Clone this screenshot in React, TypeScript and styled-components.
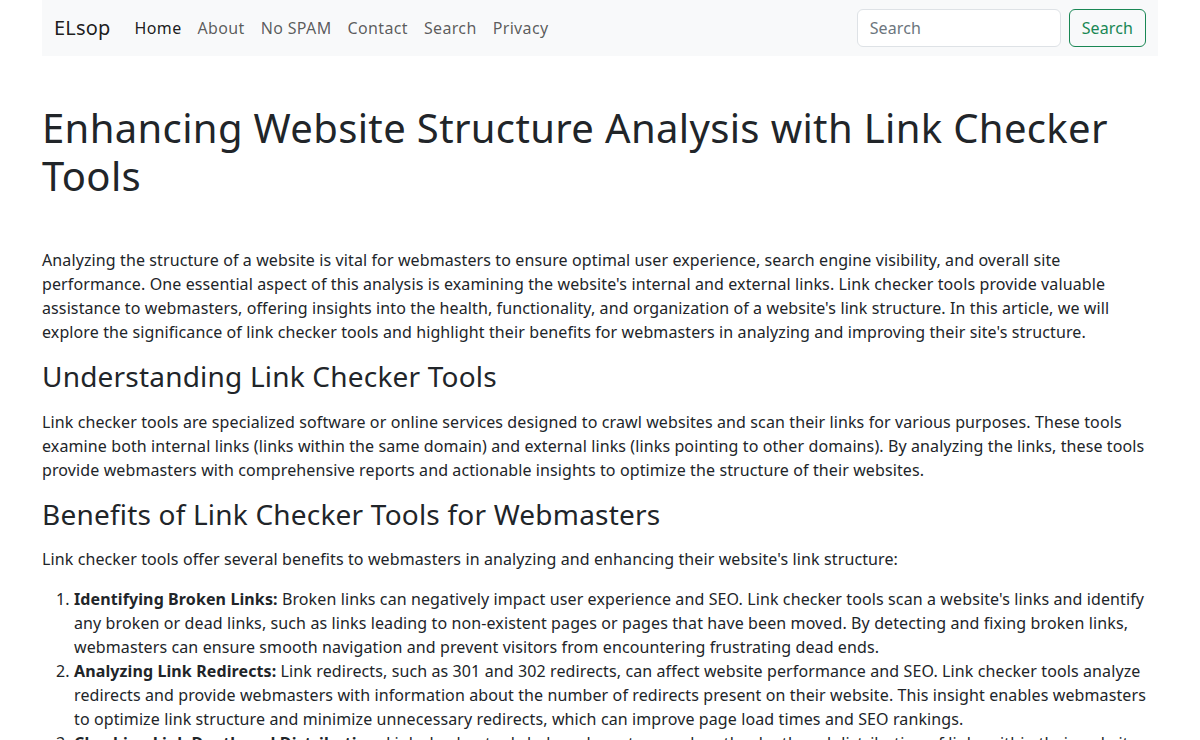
import React from 'react';
import styled, {createGlobalStyle} from 'styled-components';

const GlobalStyle = createGlobalStyle`
	* { box-sizing: border-box; }
	body {
		margin: 0;
		font-family: "Noto Sans", "Open Sans", sans-serif;
		font-size: 16px;
		line-height: 1.5;
		letter-spacing: 0.11px;
		color: #212529;
		background: #fff;
	}
`;

const Container = styled.div`
	max-width: 1140px;
	margin: 0 auto;
	padding: 0 12px;
`;

const Navbar = styled.nav`
	display: flex;
	align-items: center;
	justify-content: space-between;
	background: #f8f9fa;
	padding: 8px 12px;
	height: 56px;
`;

const Brand = styled.a`
	font-size: 20px;
	letter-spacing: 0.2px;
	color: rgba(0, 0, 0, 0.9);
	text-decoration: none;
	margin-right: 16px;
	padding: 5px 0;
`;

const NavLinks = styled.ul`
	display: flex;
	list-style: none;
	margin: 0;
	padding: 0;
	flex: 1;
`;

const NavLink = styled.a<{$active?: boolean}>`
	display: block;
	padding: 8px;
	letter-spacing: 0.35px;
	color: ${p => (p.$active ? 'rgba(0, 0, 0, 0.9)' : 'rgba(0, 0, 0, 0.65)')};
	text-decoration: none;
`;

const SearchForm = styled.form`
	display: flex;
	gap: 8px;
`;

const SearchInput = styled.input`
	width: 204px;
	height: 38px;
	padding: 6px 12px;
	font: inherit;
	letter-spacing: inherit;
	color: #212529;
	border: 1px solid #dee2e6;
	border-radius: 6px;
	background: #fff;
	&::placeholder { color: #6c757d; }
`;

const SearchButton = styled.button`
	height: 38px;
	padding: 6px 12px;
	font: inherit;
	letter-spacing: inherit;
	color: #198754;
	background: transparent;
	border: 1px solid #198754;
	border-radius: 6px;
`;

const Title = styled.h1`
	font-size: 40px;
	font-weight: 400;
	line-height: 1.2;
	letter-spacing: 0.35px;
	margin: 48px 0 48px;
`;

const Heading = styled.h3`
	font-size: 28px;
	font-weight: 400;
	line-height: 1.2;
	letter-spacing: 0.2px;
	margin: 0 0 16px;
`;

const Para = styled.p`
	margin: 0 0 16px;
`;

const List = styled.ol`
	margin: 0 0 16px;
	padding-left: 32px;
`;

const links = ['About', 'No SPAM', 'Contact', 'Search', 'Privacy'];

const benefits = [
	{
		title: 'Identifying Broken Links:',
		text: "Broken links can negatively impact user experience and SEO. Link checker tools scan a website's links and identify any broken or dead links, such as links leading to non-existent pages or pages that have been moved. By detecting and fixing broken links, webmasters can ensure smooth navigation and prevent visitors from encountering frustrating dead ends.",
	},
	{
		title: 'Analyzing Link Redirects:',
		text: 'Link redirects, such as 301 and 302 redirects, can affect website performance and SEO. Link checker tools analyze redirects and provide webmasters with information about the number of redirects present on their website. This insight enables webmasters to optimize link structure and minimize unnecessary redirects, which can improve page load times and SEO rankings.',
	},
	{
		title: 'Checking Link Depth and Distribution:',
		text: 'Link checker tools help webmasters analyze the depth and distribution of links within their website, revealing pages that are buried too deep in the site hierarchy and pages that receive too few internal links.',
	},
];

const App = () => (
	<>
		<GlobalStyle />
		<Container>
			<Navbar>
				<Brand href='#'>ELsop</Brand>
				<NavLinks>
					<li><NavLink href='#' $active>Home</NavLink></li>
					{links.map(l => (
						<li key={l}><NavLink href='#'>{l}</NavLink></li>
					))}
				</NavLinks>
				<SearchForm onSubmit={e => e.preventDefault()}>
					<SearchInput type='search' placeholder='Search' />
					<SearchButton type='submit'>Search</SearchButton>
				</SearchForm>
			</Navbar>

			<Title>Enhancing Website Structure Analysis with Link Checker Tools</Title>

			<Para>
				Analyzing the structure of a website is vital for webmasters to ensure optimal user experience, search engine visibility, and overall site performance. One essential aspect of this analysis is examining the website's internal and external links. Link checker tools provide valuable assistance to webmasters, offering insights into the health, functionality, and organization of a website's link structure. In this article, we will explore the significance of link checker tools and highlight their benefits for webmasters in analyzing and improving their site's structure.
			</Para>

			<Heading>Understanding Link Checker Tools</Heading>
			<Para>
				Link checker tools are specialized software or online services designed to crawl websites and scan their links for various purposes. These tools examine both internal links (links within the same domain) and external links (links pointing to other domains). By analyzing the links, these tools provide webmasters with comprehensive reports and actionable insights to optimize the structure of their websites.
			</Para>

			<Heading>Benefits of Link Checker Tools for Webmasters</Heading>
			<Para>
				Link checker tools offer several benefits to webmasters in analyzing and enhancing their website's link structure:
			</Para>

			<List>
				{benefits.map(b => (
					<li key={b.title}><strong>{b.title}</strong> {b.text}</li>
				))}
			</List>
		</Container>
	</>
);

export default App;
